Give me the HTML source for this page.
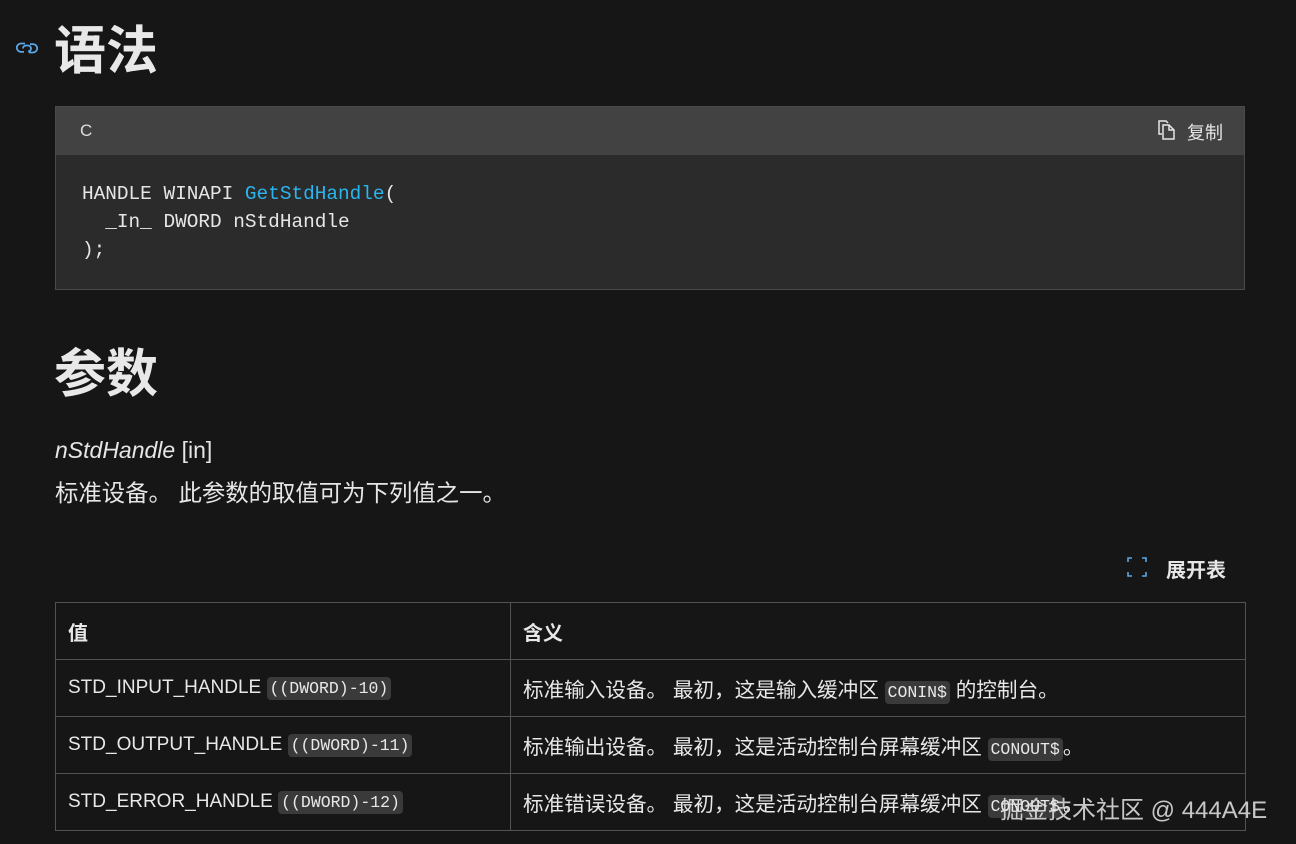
<!DOCTYPE html>
<html><head><meta charset="utf-8"><style>
body{margin:0;background:#161617;color:#e6e6e6;font-family:"Liberation Sans","Noto Sans CJK SC",sans-serif;width:1296px;height:844px;overflow:hidden;position:relative}
.a{position:absolute}
h1{position:absolute;margin:0;font-size:52px;font-weight:bold;color:#e8e8e8;line-height:1}
.code{left:55px;top:106px;width:1190px;height:184px;background:#2b2b2b;border:1px solid #4a4a4a;box-sizing:border-box}
.hdr{left:0;top:0;right:0;height:48px;background:#424242}
.mono{font-family:"Liberation Mono","DejaVu Sans Mono",monospace}
pre{position:absolute;margin:0;left:26px;top:73px;font-size:19.4px;line-height:28px;color:#e6e6e6}
table{position:absolute;left:55px;top:602px;width:1191px;border-collapse:collapse;font-size:19px}
td,th{border:1px solid #525252;height:56px;padding:0 12px;text-align:left;color:#e8e8e8}
th{font-weight:bold;font-size:20px}
td.c{font-size:20.6px}
code{font-family:"Liberation Mono","DejaVu Sans Mono",monospace;background:#3a3a3a;border-radius:4px;padding:2px 3px;font-size:16.5px}
</style></head><body>
<svg class="a" style="left:14px;top:39px" width="26" height="18" viewBox="0 0 26 18"><g fill="none" stroke="#5aa7e6" stroke-width="1.8"><path d="M11 4.5H7a4.2 4.2 0 0 0 0 8.4h3"/><path d="M15 13.5h4a4.2 4.2 0 0 0 0-8.4h-3"/><path d="M9 9.5a3 3 0 0 1 3-3h2a3 3 0 0 1 0 6"/></g></svg>
<h1 style="left:54px;top:26px">语法</h1>
<div class="a code"><div class="a hdr"></div>
<div class="a" style="left:24px;top:14px;font-size:17px;color:#ddd">C</div>
<svg class="a" style="left:1102px;top:13px" width="18" height="20" viewBox="0 0 18 20"><g fill="none" stroke="#e6e6e6" stroke-width="1.5"><path d="M4 14H1V1h7l2 2"/><path d="M5 5h6l5 5v9H5z"/><path d="M11 5v5h5"/></g></svg>
<div class="a" style="left:1131px;top:12px;font-size:18px;color:#e6e6e6">复制</div>
<pre class="mono">HANDLE WINAPI <span style="color:#2bb5ee">GetStdHandle</span>(
  _In_ DWORD nStdHandle
);</pre></div>
<h1 style="left:54px;top:349px">参数</h1>
<div class="a" style="left:55px;top:437px;font-size:23px"><i>nStdHandle</i> [in]</div>
<div class="a" style="left:55px;top:474px;font-size:23.4px">标准设备。 此参数的取值可为下列值之一。</div>
<svg class="a" style="left:1127px;top:557px" width="20" height="20" viewBox="0 0 20 20"><g fill="none" stroke="#5aa7e6" stroke-width="1.6"><path d="M1 5V1h4M15 1h4v4M19 15v4h-4M5 19H1v-4"/></g></svg>
<div class="a" style="left:1166px;top:554px;font-size:20px;font-weight:bold">展开表</div>
<table>
<tr><th style="width:430px">值</th><th>含义</th></tr>
<tr><td>STD_INPUT_HANDLE <code>((DWORD)-10)</code></td><td class="c">标准输入设备。 最初，这是输入缓冲区 <code>CONIN$</code> 的控制台。</td></tr>
<tr><td>STD_OUTPUT_HANDLE <code>((DWORD)-11)</code></td><td class="c">标准输出设备。 最初，这是活动控制台屏幕缓冲区 <code>CONOUT$</code>。</td></tr>
<tr><td>STD_ERROR_HANDLE <code>((DWORD)-12)</code></td><td class="c">标准错误设备。 最初，这是活动控制台屏幕缓冲区 <code>CONOUT$</code>。</td></tr>
</table>
<div class="a" style="left:1000px;top:790px;font-size:24px;color:rgba(230,230,230,0.85)">掘金技术社区 @ 444A4E</div>
</body></html>
